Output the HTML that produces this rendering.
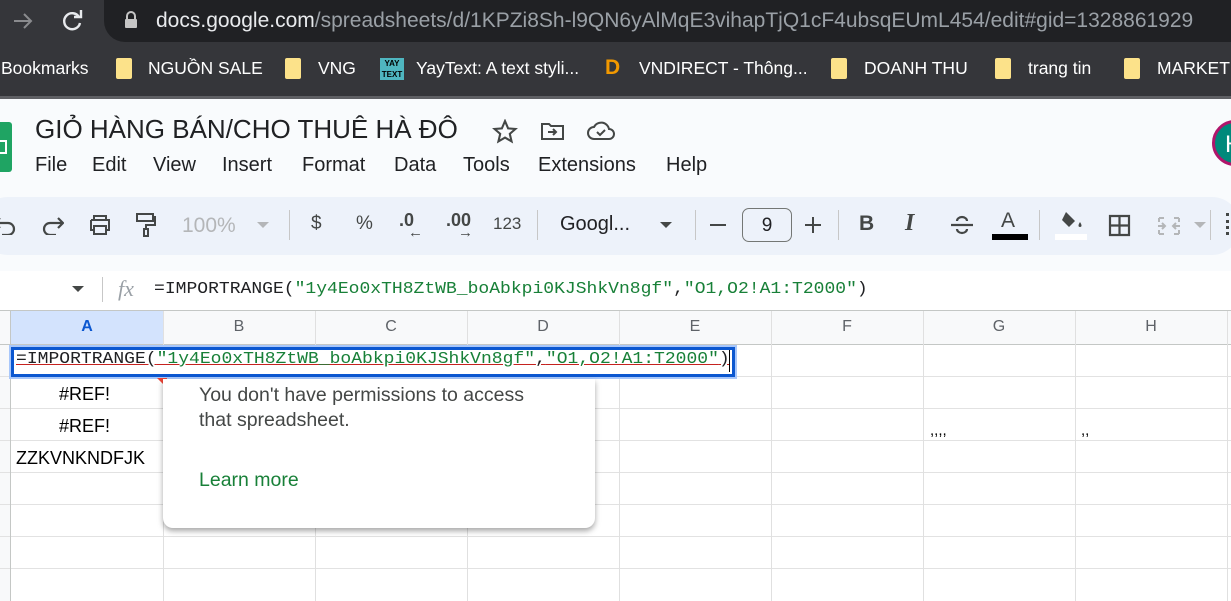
<!DOCTYPE html>
<html><head><meta charset="utf-8"><style>
*{margin:0;padding:0;box-sizing:border-box}
body{width:1231px;height:601px;overflow:hidden;position:relative;background:#fff;font-family:"Liberation Sans","Noto Sans CJK SC",sans-serif}
.a{position:absolute;white-space:nowrap}
.mono{font-family:"Liberation Mono","DejaVu Sans Mono",monospace;transform-origin:0 0;transform:scaleX(1.06)}
.bm{color:#fff;font-size:17.5px;top:58px}
.fold{position:absolute;top:58px;width:16px;height:21px;background:#fce28a;border-radius:2px}
.menu{top:154px;font-size:20px;color:#202124}
.tb{top:212px;font-size:19px;color:#444746}
.vl{position:absolute;width:1px;background:#e0e0e0}
.hl{position:absolute;height:1px;background:#e2e2e2;left:0;width:1231px}
.col{top:318px;font-size:16px;color:#5f6368;text-align:center;width:152px}
.cell{font-size:18px;color:#000}
</style></head><body>
<!-- chrome top -->
<div class="a" style="left:0;top:0;width:1231px;height:46px;background:#35363a"></div>
<div class="a" style="left:104px;top:0;width:1140px;height:42px;background:#202124;border-radius:0 0 0 21px"></div>
<svg class="a" style="left:12px;top:10px" width="22" height="22" viewBox="0 0 22 22"><path d="M2 11h17M12 4l7 7-7 7" fill="none" stroke="#8a8b8e" stroke-width="2"/></svg>
<svg class="a" style="left:60px;top:9px" width="24" height="24" viewBox="0 0 24 24"><path d="M19 8a8 8 0 1 0 1 6" fill="none" stroke="#e8eaed" stroke-width="2.4"/><path d="M14 8h7V1" fill="none" stroke="#e8eaed" stroke-width="2.4"/></svg>
<svg class="a" style="left:124px;top:11px" width="14" height="18" viewBox="0 0 14 18"><path d="M3 8V5a4 4 0 0 1 8 0v3" fill="none" stroke="#c5c5c5" stroke-width="2"/><rect x="1" y="8" width="12" height="9" rx="1" fill="#c5c5c5"/></svg>
<div class="a" style="left:156px;top:9px;font-size:21px;color:#e8eaed">docs.google.com<span style="color:#9aa0a6">/spreadsheets/d/1KPZi8Sh-l9QN6yAlMqE3vihapTjQ1cF4ubsqEUmL454/edit#gid=1328861929</span></div>
<div class="a" style="left:0;top:46px;width:1231px;height:50px;background:#35363a"></div>
<div class="a" style="left:0;top:96px;width:1231px;height:3px;background:#5f6064"></div>
<div class="a bm" style="left:1px">Bookmarks</div>
<div class="fold" style="left:116px"></div><div class="a bm" style="left:148px">NGUỒN SALE</div>
<div class="fold" style="left:285px"></div><div class="a bm" style="left:318px">VNG</div>
<div class="a" style="left:380px;top:58px;width:24px;height:22px;background:#4fb6c0;font-size:8px;color:#000;line-height:11px;text-align:center;font-weight:bold">YAY<br>TEXT</div><div class="a bm" style="left:416px">YayText: A text styli...</div>
<div class="a" style="left:605px;top:56px;font-size:21px;color:#f29900;font-weight:bold">D</div><div class="a bm" style="left:639px">VNDIRECT - Thông...</div>
<div class="fold" style="left:831px"></div><div class="a bm" style="left:864px">DOANH THU</div>
<div class="fold" style="left:995px"></div><div class="a bm" style="left:1028px">trang tin</div>
<div class="fold" style="left:1124px"></div><div class="a bm" style="left:1157px">MARKETII</div>
<!-- app header -->
<div class="a" style="left:0;top:99px;width:1231px;height:172px;background:#f9fbfd"></div>
<div class="a" style="left:-12px;top:122px;width:24px;height:50px;background:#1fa463;border-radius:3px"></div>
<div class="a" style="left:0;top:140px;width:7px;height:14px;border:2px solid #fff;border-left:none"></div>
<div class="a" style="left:35px;top:114px;font-size:26px;color:#202124">GIỎ HÀNG BÁN/CHO THUÊ HÀ ĐÔ</div>
<svg class="a" style="left:492px;top:119px" width="26" height="25" viewBox="0 0 24 24"><path d="M12 2l3 7 7 .6-5.4 4.7 1.7 7.2L12 17.8 5.7 21.5l1.7-7.2L2 9.6 9 9z" fill="none" stroke="#444746" stroke-width="2"/></svg>
<svg class="a" style="left:540px;top:121px" width="26" height="20" viewBox="0 0 26 20"><path d="M2 3h7l2 2h12v13H2z" fill="none" stroke="#444746" stroke-width="2"/><path d="M8 11h8M13 8l3 3-3 3" fill="none" stroke="#444746" stroke-width="2"/></svg>
<svg class="a" style="left:586px;top:120px" width="30" height="22" viewBox="0 0 30 22"><path d="M8 19h15a5 5 0 0 0 0-10 8 8 0 0 0-15-2 6 6 0 0 0 0 12z" fill="none" stroke="#444746" stroke-width="2"/><path d="M11 12l3 3 5-5" fill="none" stroke="#444746" stroke-width="2"/></svg>
<div class="a menu" style="left:35px">File</div><div class="a menu" style="left:92px">Edit</div><div class="a menu" style="left:153px">View</div><div class="a menu" style="left:222px">Insert</div><div class="a menu" style="left:302px">Format</div><div class="a menu" style="left:394px">Data</div><div class="a menu" style="left:463px">Tools</div><div class="a menu" style="left:538px">Extensions</div><div class="a menu" style="left:666px">Help</div>
<div class="a" style="left:1212px;top:120px;width:46px;height:46px;border-radius:50%;background:#00897b;border:3px solid #b0156b;color:#fff;font-size:24px;padding:8px 0 0 10px">H</div>
<!-- toolbar -->
<div class="a" style="left:-20px;top:197px;width:1260px;height:58px;background:#edf2fa;border-radius:28px"></div>
<svg class="a" style="left:-6px;top:215px" width="22" height="20" viewBox="0 0 22 20"><path d="M2 8h12a6 6 0 0 1 0 12H8M6 3L1 8l5 5" fill="none" stroke="#444746" stroke-width="2.2"/></svg>
<svg class="a" style="left:42px;top:215px" width="22" height="20" viewBox="0 0 22 20"><path d="M20 8H8a6 6 0 0 0 0 12h6M16 3l5 5-5 5" fill="none" stroke="#444746" stroke-width="2.2"/></svg>
<svg class="a" style="left:88px;top:214px" width="24" height="22" viewBox="0 0 24 22"><path d="M6 6V2h12v4M3 6h18v10h-3M6 16H3V6M6 12h12v8H6z" fill="none" stroke="#444746" stroke-width="2"/></svg>
<svg class="a" style="left:135px;top:212px" width="22" height="26" viewBox="0 0 22 26"><path d="M2 2h16v7H2zM18 5h2v8h-9v4M9 17h4v7H9z" fill="none" stroke="#444746" stroke-width="2"/></svg>
<div class="a tb" style="left:182px;top:214px;font-size:21px;color:#b4b6b8">100%</div>
<div class="a" style="left:257px;top:222px;border:6px solid transparent;border-top-color:#b4b6b8"></div>
<div class="vl" style="left:289px;top:210px;height:30px;background:#c7c7c7"></div>
<div class="a tb" style="left:311px;top:213px">$</div>
<div class="a tb" style="left:356px;top:213px">%</div>
<div class="a tb" style="left:399px;top:210px;font-weight:bold;font-size:18px">.0<span style="position:absolute;left:9px;top:14px;font-size:15px">←</span></div>
<div class="a tb" style="left:446px;top:210px;font-weight:bold;font-size:18px">.00<span style="position:absolute;left:12px;top:14px;font-size:15px">→</span></div>
<div class="a tb" style="left:493px;font-size:17px;top:214px">123</div>
<div class="vl" style="left:537px;top:210px;height:30px;background:#c7c7c7"></div>
<div class="a tb" style="left:560px;top:213px;font-size:20px;color:#202124">Googl...</div>
<div class="a" style="left:660px;top:222px;border:6px solid transparent;border-top-color:#444746"></div>
<div class="vl" style="left:695px;top:210px;height:30px;background:#c7c7c7"></div>
<div class="a" style="left:710px;top:224px;width:16px;height:2px;background:#444746"></div>
<div class="a" style="left:742px;top:208px;width:50px;height:34px;border:1px solid #747775;border-radius:7px;font-size:19px;text-align:center;padding-top:6px;color:#202124">9</div>
<div class="a" style="left:805px;top:224px;width:16px;height:2px;background:#444746"></div>
<div class="a" style="left:812px;top:217px;width:2px;height:16px;background:#444746"></div>
<div class="vl" style="left:838px;top:210px;height:30px;background:#c7c7c7"></div>
<div class="a tb" style="left:859px;font-weight:bold;font-size:21px;top:212px">B</div>
<div class="a tb" style="left:905px;font-style:italic;font-weight:bold;font-family:'Liberation Serif',serif;font-size:24px;top:210px">I</div>
<svg class="a" style="left:950px;top:214px" width="24" height="22" viewBox="0 0 24 22"><path d="M1 11h22M7 7a5 4 0 0 1 10 0M7 15a5 4 0 0 0 10 0" fill="none" stroke="#444746" stroke-width="2.2"/></svg>
<div class="a tb" style="left:1001px;top:209px;font-size:21px">A</div>
<div class="a" style="left:992px;top:234px;width:36px;height:6px;background:#000"></div>
<div class="vl" style="left:1039px;top:210px;height:30px;background:#c7c7c7"></div>
<svg class="a" style="left:1058px;top:210px" width="28" height="22" viewBox="0 0 28 22"><path d="M8 2l9 9-6 6-7-7z" fill="#444746"/><path d="M22 12c-2 3-2 5 0 5s2-2 0-5z" fill="#444746"/></svg>
<div class="a" style="left:1055px;top:234px;width:32px;height:6px;background:#fff"></div>
<svg class="a" style="left:1108px;top:214px" width="23" height="23" viewBox="0 0 23 23"><path d="M2 2h19v19H2zM11.5 2v19M2 11.5h19" fill="none" stroke="#444746" stroke-width="2.2"/></svg>
<svg class="a" style="left:1156px;top:214px" width="26" height="24" viewBox="0 0 26 24"><path d="M3 4h5M3 20h5M3 4v4M3 16v4M23 4h-5M23 20h-5M23 4v4M23 16v4M2 12h7M6 9l3 3-3 3M24 12h-7M20 9l-3 3 3 3" fill="none" stroke="#b4b6b8" stroke-width="2"/></svg>
<div class="a" style="left:1194px;top:222px;border:6px solid transparent;border-top-color:#b4b6b8"></div>
<div class="vl" style="left:1210px;top:210px;height:30px;background:#c7c7c7"></div>
<div class="a" style="left:1226px;top:213px;width:3px;height:22px;border-left:3px dotted #444746"></div>
<!-- formula bar -->
<div class="a" style="left:0;top:271px;width:1231px;height:40px;background:#fff"></div>
<div class="a" style="left:72px;top:286px;border:6px solid transparent;border-top-color:#444746"></div>
<div class="vl" style="left:102px;top:277px;height:25px;background:#c7c7c7"></div>
<div class="a" style="left:118px;top:276px;font-size:22px;font-style:italic;font-family:'Liberation Serif',serif;color:#9aa0a6">fx</div>
<div class="a mono" style="left:154px;top:280px;font-size:17px;color:#202124">=IMPORTRANGE(<span style="color:#188038">"1y4Eo0xTH8ZtWB_boAbkpi0KJShkVn8gf"</span>,<span style="color:#188038">"O1,O2!A1:T2000"</span>)</div>
<!-- grid -->
<div class="a" style="left:0;top:311px;width:1231px;height:33px;background:#f8f9fa"></div>
<div class="a" style="left:0;top:311px;width:10px;height:290px;background:#f8f9fa"></div>
<div class="a" style="left:10px;top:311px;width:153px;height:33px;background:#d3e3fd"></div>
<div class="hl" style="top:310px;background:#c4c7c5"></div>
<div class="hl" style="top:344px;background:#c4c7c5"></div>
<div class="hl" style="top:376px"></div><div class="hl" style="top:408px"></div><div class="hl" style="top:440px"></div><div class="hl" style="top:472px"></div><div class="hl" style="top:504px"></div><div class="hl" style="top:536px"></div><div class="hl" style="top:568px"></div>
<div class="vl" style="left:10px;top:311px;height:290px;background:#c4c7c5"></div>
<div class="vl" style="left:163px;top:311px;height:290px"></div>
<div class="vl" style="left:315px;top:311px;height:290px"></div>
<div class="vl" style="left:467px;top:311px;height:290px"></div>
<div class="vl" style="left:619px;top:311px;height:290px"></div>
<div class="vl" style="left:771px;top:311px;height:290px"></div>
<div class="vl" style="left:923px;top:311px;height:290px"></div>
<div class="vl" style="left:1075px;top:311px;height:290px"></div>
<div class="vl" style="left:1227px;top:311px;height:290px"></div>
<div class="a col" style="left:11px;color:#0b57d0;font-weight:bold">A</div>
<div class="a col" style="left:163px">B</div><div class="a col" style="left:315px">C</div><div class="a col" style="left:467px">D</div><div class="a col" style="left:619px">E</div><div class="a col" style="left:771px">F</div><div class="a col" style="left:923px">G</div><div class="a col" style="left:1075px">H</div>
<!-- edit box -->
<div class="a" style="left:9px;top:345px;width:728px;height:34px;border:2px solid #a8c7fa;background:#fff"></div>
<div class="a" style="left:11px;top:347px;width:724px;height:30px;border:3px solid #0b57d0"></div>
<div class="a mono" style="left:16px;top:350px;font-size:17px;color:#202124;text-decoration:underline;text-decoration-color:#c5221f">=IMPORTRANGE(<span style="color:#188038">"1y4Eo0xTH8ZtWB_boAbkpi0KJShkVn8gf"</span>,<span style="color:#188038">"O1,O2!A1:T2000"</span>)</div>
<div class="a" style="left:729px;top:350px;width:1px;height:22px;background:#000"></div>
<div class="a cell" style="left:59px;top:384px">#REF!</div>
<div class="a cell" style="left:59px;top:416px">#REF!</div>
<div class="a cell" style="left:16px;top:448px">ZZKVNKNDFJK</div>
<div class="a" style="left:157px;top:378px;border:5px solid transparent;border-top-color:#ea4335;border-right-color:#ea4335"></div>
<div class="a" style="left:930px;top:422px;font-size:15px">,,,,</div>
<div class="a" style="left:1081px;top:422px;font-size:15px">,,</div>
<!-- popup -->
<div class="a" style="left:163px;top:379px;width:432px;height:149px;background:#fff;border-radius:0 0 10px 10px;box-shadow:0 3px 6px rgba(0,0,0,.35)"></div>
<div class="a" style="left:199px;top:383px;font-size:19.5px;color:#444746;line-height:25px">You don't have permissions to access<br>that spreadsheet.</div>
<div class="a" style="left:199px;top:469px;font-size:19.5px;color:#188038">Learn more</div>
</body></html>
